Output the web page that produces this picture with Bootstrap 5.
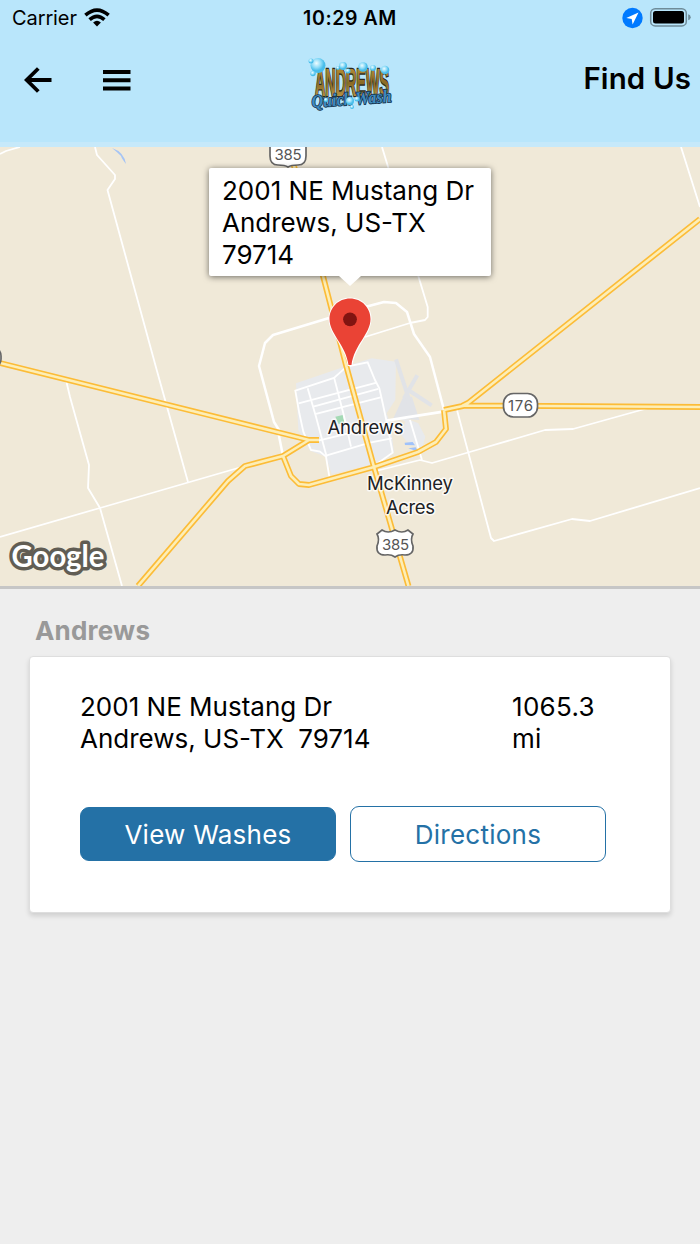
<!DOCTYPE html>
<html lang="en">
<head>
  <meta charset="UTF-8">
  <meta name="viewport" content="width=device-width, initial-scale=1.0">
  <title>Find Us - Andrews Quick Wash</title>
  <link href="https://cdn.jsdelivr.net/npm/bootstrap@5.3.0/dist/css/bootstrap.min.css" rel="stylesheet">
  <style>
    body { background: #eee; color: #000; font-family: Inter, "Liberation Sans", sans-serif; font-size: 26px; line-height: 32px; min-height: 1244px; overflow: hidden; }
    svg { display: block; }
    .app-header { height: 147px; background: #b9e6fb; border-bottom: 5px solid #c6e9fa; }
    .status-bar { height: 36px; font-size: 20px; line-height: 36px; }
    .status-left, .status-right { flex: 0 0 290px; }
    .status-left { gap: 7px; padding-left: 12px; letter-spacing: -.1px; }
    .status-right { padding-right: 9px; }
    .clock { flex: 1; font-weight: 600; font-size: 19.5px; letter-spacing: .6px; white-space: nowrap; }
    .title-bar { height: 88px; }
    .title-left, .title-right { flex: 0 0 305px; }
    .title-left { padding-left: 24px; gap: 51px; }
    .title-right { padding-right: 9px; }
    .brand-logo { margin-top: 8px; overflow: visible; }
    .page-title { font-size: 29.5px; font-weight: 600; letter-spacing: .1px; line-height: 36px; margin: 0 0 4px; }
    .map-box { height: 442px; border-bottom: 3px solid #c6c6c6; }
    .callout { top: 21px; left: 209px; width: 282px; height: 108px; padding: 7px 13px; border-radius: 2px; line-height: 32.2px; white-space: nowrap; box-shadow: 0 1px 6px rgba(0,0,0,.55); }
    .callout::after { content: ""; position: absolute; top: 108px; left: 130px; border: 11px solid transparent; border-top: 10px solid #fff; border-bottom: 0; }
    .place-name { font-size: 26px; font-weight: 700; color: #999; line-height: 32px; margin: 26px 0 9px 35px; letter-spacing: .2px; }
    .place-card { margin: 0 29px; height: 257px; padding: 34px 64px 0 50px; border: 1px solid #dedede; border-radius: 4px; box-shadow: 0 3px 5px rgba(0,0,0,.13); --bs-card-color: #000; }
    .address { white-space: pre; }
    .distance { width: 94px; letter-spacing: .3px; }
    .place-actions { gap: 14px; margin-top: 51px; }
    .place-actions .btn { width: 256px; height: 56px; padding: 0; font-size: 26px; letter-spacing: .25px; border-radius: 9px; --bs-btn-color: #2471a6; --bs-btn-border-color: #2471a6; }
    .place-actions .btn-washes { height: 54px; background: #2471a6; color: #fff; }
  </style>
</head>
<body>
  <header class="app-header">
    <div class="status-bar d-flex align-items-center">
      <div class="status-left d-flex align-items-center">
        <span>Carrier</span>
        <svg width="26" height="20" viewBox="0 0 26 20" fill="none" stroke="#000" stroke-width="3.6">
          <path d="M1.4 7.2Q13-3 24.6 7.2M5.6 11.7q7.4-6.6 14.8 0"/>
          <path d="M13 18.4l-3.9-4q3.9-3.2 7.8 0z" fill="#000" stroke="none"/>
        </svg>
      </div>
      <div class="clock text-center">10:29 AM</div>
      <div class="status-right d-flex justify-content-end align-items-center">
        <svg width="69" height="22" viewBox="0 0 69 22">
          <circle cx="10.5" cy="11" r="10.2" fill="#007aff"/>
          <path d="M16.5 5.5L4.3 11l5.4 1.1.9 5.4z" fill="#fff"/>
          <rect x="28.7" y="1.7" width="35.6" height="17.2" rx="4.5" fill="none" stroke="#6f8c99" stroke-width="1.5"/>
          <rect x="31" y="4.1" width="31" height="12.4" rx="2.5"/>
          <path d="M66.2 7.3q2.5.7 2.5 3t-2.5 3z" fill="#6f8c99"/>
        </svg>
      </div>
    </div>
    <div class="title-bar d-flex align-items-center">
      <div class="title-left d-flex align-items-center">
        <svg width="28" height="26" viewBox="0 0 28 26" fill="none" stroke="#000" stroke-width="3.8">
          <path d="M27.5 13H3M14.3 1.5L2.7 13l11.6 11.5"/>
        </svg>
        <svg width="28" height="21" viewBox="0 0 28 21">
          <path d="M0 0h27.5v4H0zM0 8.3h27.5v4H0zM0 16.6h27.5v4H0z"/>
        </svg>
      </div>
      <!-- brand logo -->
      <svg class="brand-logo" width="90" height="56" viewBox="305 56 90 56">
        <defs>
          <linearGradient id="gold" x1="0" y1="0" x2="0" y2="1">
            <stop offset="0" stop-color="#c49a3c"/><stop offset=".5" stop-color="#8a6a25"/><stop offset="1" stop-color="#d2ac55"/>
          </linearGradient>
          <radialGradient id="bubble" cx=".4" cy=".35">
            <stop offset="0" stop-color="#effcff"/><stop offset=".6" stop-color="#8edcf8"/><stop offset="1" stop-color="#48bdea"/>
          </radialGradient>
        </defs>
        <text transform="translate(315 96) scale(1 1.75)" textLength="74" lengthAdjust="spacingAndGlyphs" font-family="Liberation Sans" font-weight="700" font-size="22" fill="url(#gold)" stroke="#2b2a20" stroke-width="1.5" paint-order="stroke">ANDREWS</text>
        <text transform="translate(312 107.5) rotate(-4)" textLength="80" lengthAdjust="spacingAndGlyphs" font-family="Liberation Serif" font-style="italic" font-weight="700" font-size="18" fill="#3f8bc0" stroke="#18364f" stroke-width="1.8" paint-order="stroke">Quick Wash</text>
        <g fill="url(#bubble)">
          <circle cx="318" cy="65.5" r="7.5"/><circle cx="311" cy="61" r="2.5"/><circle cx="313" cy="73.5" r="2.7"/>
          <circle cx="343" cy="66" r="4"/><circle cx="338" cy="68" r="2"/><circle cx="348" cy="71" r="2.5"/><circle cx="363" cy="67" r="4.8"/>
          <circle cx="373" cy="68" r="3"/><circle cx="385" cy="70" r="4.3"/><circle cx="350" cy="101" r="4"/><circle cx="357" cy="99" r="2.5"/><circle cx="352" cy="107" r="2"/><circle cx="326" cy="100" r="2.2"/>
        </g>
      </svg>
      <div class="title-right text-end"><h1 class="page-title">Find Us</h1></div>
    </div>
  </header>

  <section class="map-box position-relative">
    <svg width="700" height="439" viewBox="0 147 700 439" font-family="Inter, sans-serif">
      <rect y="147" width="700" height="439" fill="#f0e9d8"/>
      <path d="M112 148q12 4 14 16-4-5-5-8-4-4-9-8z" fill="#a5c4f5"/>

      <!-- built-up area, drawn on a three times finer grid -->
      <g transform="translate(240 270) scale(.3333)">
        <path d="M168 340L300 295 395 265 468 275 466 390 440 430 445 445 505 448 535 460 556 500 545 542 498 512 480 490 460 550 410 580 275 612 258 560 210 542 175 480z" fill="#e8eaed"/>
        <path d="M445 445L470 440 496 455 462 545 456 500z" fill="#f0e9d8"/>
        <path d="M490 380h26l22 70-78-5z" fill="#e1e3e7"/>
        <path d="M468 268L506 385 500 440M532 316L492 385M505 360L575 406" fill="none" stroke="#e1e3e7" stroke-width="12"/>
        <path d="M286 440l22-5 6 25-18 2z" fill="#a4dab5"/>
        <path d="M494 518l24-2 7 10-30-1zM505 535l22-3 8 13z" fill="#9fc2fb"/>
        <g fill="none" stroke="#fff" stroke-width="5.5">
          <path d="M320 290L282 324 166 362 178 430 190 485 213 540 240 545 258 560 268 620"/>
          <path d="M320 290L383 277 405 330 418 355 426 390 440 455 458 548 410 582"/>
          <path d="M176 400L410 338M220 410L415 357M228 432L422 382"/>
          <path d="M203 355L228 440 260 560M282 322L310 430 333 530"/>
          <path d="M235 512L430 465M258 557L390 518 455 505"/>
          <path d="M440 452L500 442 610 425" stroke-width="8"/>
          <path d="M510 450L546 570"/>
        </g>
      </g>

      <!-- local roads -->
      <g fill="none" stroke="#fff" stroke-width="1.8" stroke-linejoin="round">
        <path d="M0 154L6 151 20 147M95 147L97 155 115 175V179L107.5 190 157 371 188 482"/>
        <path d="M66 380L70 397 89 465 88 488 100 508 122 586M0 537L100 508 245 466"/>
        <path d="M681 147L700 207M382 147L389 170M418 275L427.7 307V317L425 320 410 323 365 337"/>
        <path d="M457 410L491 538 494 541 572 519 590 521 700 488M376 471L420 460 432 463 480 449 545 430 573 429 652 407"/>
        <path d="M329 318L273 335 265 343 259 366 274 422 279 430V436L283 456M365 307L384 302 396 303 407 312 414 334 430 357 444 410" stroke-width="2.5"/>
      </g>

      <!-- highways: orange casing, pale core -->
      <defs>
        <path id="highways" d="M0 363L309 440H319M138 586L228 481 245 466 283 456 309 440M283 456L291 476 299 484 309 485 374 467 418 452 436 442 446 429 444 410M444 410L465 405.5 700 407M462 406L468 403 700 219M289 147L323 276 346 365 374 467 408.5 586"/>
      </defs>
      <g fill="none" stroke-linejoin="round">
        <use href="#highways" stroke="#fcbc37" stroke-width="5.9"/>
        <use href="#highways" stroke="#fdeeb6" stroke-width="2.6"/>
      </g>

      <!-- road shields -->
      <g fill="#fff" stroke="#666" stroke-width="1.7">
        <path d="M270 142H306V156Q306 165 298 165 291 165 288 167 285 165 278 165 270 165 270 156z"/>
        <path d="M382 530Q388 534 395 530 402 534 408 530L413 534Q410 539 413 546 414 555 405 555 399 554 395 557 391 554 385 555 376 555 377 546 380 539 377 534z"/>
        <rect x="503.5" y="393.5" width="34" height="23.5" rx="10"/>
        <rect x="-33" y="346" width="34" height="23" rx="10"/>
      </g>
      <g font-size="15" fill="#555" text-anchor="middle">
        <text x="288" y="159.5" textLength="27">385</text>
        <text x="395.5" y="549.5" textLength="27">385</text>
        <text x="520.5" y="411" textLength="25">176</text>
      </g>

      <g font-size="18.5" fill="#202124" stroke="#fff" stroke-width="3" stroke-opacity=".75" stroke-linejoin="round" paint-order="stroke">
        <text x="327.5" y="433.5" textLength="76">Andrews</text>
        <text x="367" y="490" textLength="86">McKinney</text>
        <text x="386" y="514" textLength="49">Acres</text>
      </g>

      <text x="11.5" y="567" textLength="93" lengthAdjust="spacingAndGlyphs" font-family="Lato, sans-serif" font-weight="700" font-size="31" fill="#fff" stroke="#615d54" stroke-width="7" stroke-linejoin="round" paint-order="stroke">Google</text>

      <!-- location pin -->
      <path d="M350 298.5C338.5 298.5 329.5 307.5 329.5 319 329.5 334 346 345 348.5 365H351.5C354 345 370.5 334 370.5 319 370.5 307.5 361.5 298.5 350 298.5z" fill="#ea4335" stroke="#fff" stroke-width="2" paint-order="stroke"/>
      <circle cx="350" cy="319.3" r="6.9" fill="#811411"/>
    </svg>
    <div class="callout position-absolute bg-white">2001 NE Mustang Dr<br>Andrews, US-TX<br>79714</div>
  </section>

  <main>
    <h2 class="place-name">Andrews</h2>
    <div class="card place-card">
      <div class="d-flex justify-content-between">
        <div class="address">2001 NE Mustang Dr
Andrews, US-TX  79714</div>
        <div class="distance">1065.3 mi</div>
      </div>
      <div class="place-actions d-flex align-items-center">
        <button type="button" class="btn btn-washes">View Washes</button>
        <button type="button" class="btn btn-directions">Directions</button>
      </div>
    </div>
  </main>
  <script src="https://cdn.jsdelivr.net/npm/bootstrap@5.3.0/dist/js/bootstrap.bundle.min.js"></script>
</body>
</html>
